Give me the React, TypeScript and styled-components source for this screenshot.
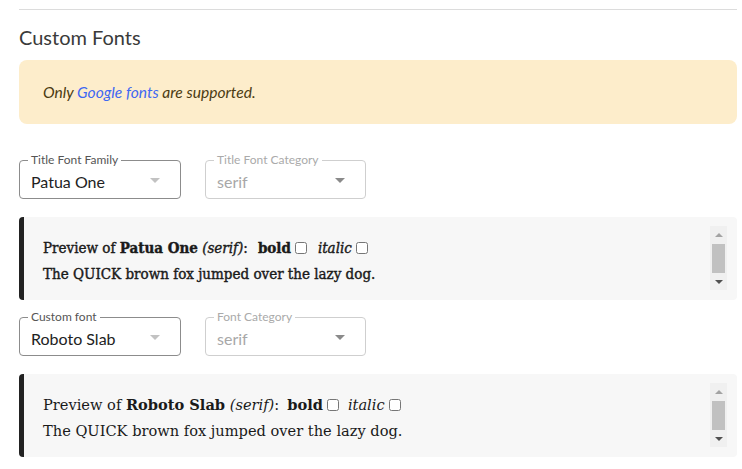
import * as React from "react";
import styled, { createGlobalStyle } from "styled-components";

const GlobalStyle = createGlobalStyle`
    body {
        margin: 0;
        background: #fff;
        font-family: Lato, "Liberation Sans", sans-serif;
        color: #333;
    }
`;

const Page = styled.div`
    width: 718px;
    margin-left: 19px;
    padding-top: 9px;
`;

const Divider = styled.hr`
    margin: 0;
    border: 0;
    border-top: 1px solid #dcdcdc;
`;

const Heading = styled.h2`
    margin: 14px 0 10px;
    font-size: 20px;
    font-weight: 400;
    line-height: 26px;
    color: #3a3a3a;
`;

const Alert = styled.div`
    height: 64px;
    display: flex;
    align-items: center;
    padding: 0 24px;
    box-sizing: border-box;
    border-radius: 8px;
    background: #fdedcb;
    color: #4b3b12;
    font-size: 15.6px;
    font-style: italic;
`;

const AlertLink = styled.a`
    color: #3f68f2;
    text-decoration: none;
`;

const SelectRow = styled.div<{ $top: number }>`
    display: flex;
    gap: 24px;
    margin-top: ${(p) => p.$top}px;
`;

const SelectBox = styled.div<{ $disabled?: boolean }>`
    position: relative;
    width: ${(p) => (p.$disabled ? 161 : 162)}px;
    height: 39px;
    box-sizing: border-box;
    display: flex;
    align-items: center;
    justify-content: space-between;
    padding: 3px 20px 0 11px;
    border: 1px solid ${(p) => (p.$disabled ? "#cfcfcf" : "#8c8c8c")};
    border-radius: 4px;
    font-size: 16px;
    color: ${(p) => (p.$disabled ? "#a8a8a8" : "#222")};
`;

const SelectLabel = styled.span<{ $disabled?: boolean }>`
    position: absolute;
    top: -8px;
    left: 8px;
    padding: 0 3px;
    background: #fff;
    font-size: 12px;
    line-height: 14px;
    color: ${(p) => (p.$disabled ? "#aaa" : "#555")};
`;

const Caret = styled.span<{ $disabled?: boolean }>`
    width: 0;
    height: 0;
    border-left: 5px solid transparent;
    border-right: 5px solid transparent;
    border-top: 5px solid ${(p) => (p.$disabled ? "#8a8a8a" : "#c2c2c2")};
    margin-top: -2px;
`;

const PreviewBox = styled.div`
    display: flex;
    margin-top: 18px;
    padding: 9px 10px 10px 0;
    border-left: 5px solid #222;
    border-radius: 4px;
    background: #f7f7f7;
`;

const PreviewText = styled.div<{ $font: string; $size: number; $heavy?: boolean }>`
    flex: 1;
    padding: 9px 0 3px 19px;
    font-family: ${(p) => p.$font};
    font-size: ${(p) => p.$size}px;
    line-height: 26px;
    color: #1a1a1a;
    -webkit-text-stroke: ${(p) => (p.$heavy ? "0.4px #1a1a1a" : "0")};
`;

const Toggle = styled.label<{ $gap: number }>`
    margin-left: ${(p) => p.$gap}px;

    input {
        width: 12px;
        height: 12px;
        margin: 0 0 0 4px;
        vertical-align: -1px;
    }
`;

const Scrollbar = styled.div`
    width: 17px;
    display: flex;
    flex-direction: column;
    align-items: center;
    background: #f0f0f0;
`;

const ScrollArrow = styled.span<{ $up?: boolean }>`
    height: 17px;
    display: flex;
    align-items: center;

    &::before {
        content: "";
        border-left: 4px solid transparent;
        border-right: 4px solid transparent;
        ${(p) =>
            p.$up
                ? "border-bottom: 4px solid #a3a3a3;"
                : "border-top: 4px solid #505050;"}
    }
`;

const ScrollThumb = styled.span`
    width: 13px;
    height: 29px;
    margin-top: 1px;
    background: #c1c1c1;
`;

const Spacer = styled.span`
    flex: 1;
`;

interface SelectProps {
    label: string;
    value: string;
    disabled?: boolean;
}

const Select: React.FC<SelectProps> = ({ label, value, disabled }) => (
    <SelectBox $disabled={disabled}>
        <SelectLabel $disabled={disabled}>{label}</SelectLabel>
        <span>{value}</span>
        <Caret $disabled={disabled} />
    </SelectBox>
);

interface PreviewProps {
    name: string;
    font: string;
    size: number;
    gap: number;
    heavy?: boolean;
}

const Preview: React.FC<PreviewProps> = ({ name, font, size, gap, heavy }) => (
    <PreviewBox>
        <PreviewText $font={font} $size={size} $heavy={heavy}>
            <div>
                Preview of <b>{name}</b> <i>(serif)</i>:
                <Toggle $gap={gap}>
                    <b>bold</b>
                    <input type="checkbox" />
                </Toggle>
                <Toggle $gap={gap + 1}>
                    <i>italic</i>
                    <input type="checkbox" />
                </Toggle>
            </div>
            <div>The QUICK brown fox jumped over the lazy dog.</div>
        </PreviewText>
        <Scrollbar>
            <ScrollArrow $up />
            <ScrollThumb />
            <Spacer />
            <ScrollArrow />
        </Scrollbar>
    </PreviewBox>
);

export default function App() {
    return (
        <Page>
            <GlobalStyle />
            <Divider />
            <Heading>Custom Fonts</Heading>
            <Alert>
                <span>
                    Only <AlertLink href="#">Google fonts</AlertLink> are supported.
                </span>
            </Alert>
            <SelectRow $top={36}>
                <Select label="Title Font Family" value="Patua One" />
                <Select label="Title Font Category" value="serif" disabled />
            </SelectRow>
            <Preview
                name="Patua One"
                font={'"DejaVu Serif Condensed", serif'}
                size={15}
                gap={10}
                heavy
            />
            <SelectRow $top={17}>
                <Select label="Custom font" value="Roboto Slab" />
                <Select label="Font Category" value="serif" disabled />
            </SelectRow>
            <Preview name="Roboto Slab" font={'"DejaVu Serif", serif'} size={14.6} gap={8} />
        </Page>
    );
}
